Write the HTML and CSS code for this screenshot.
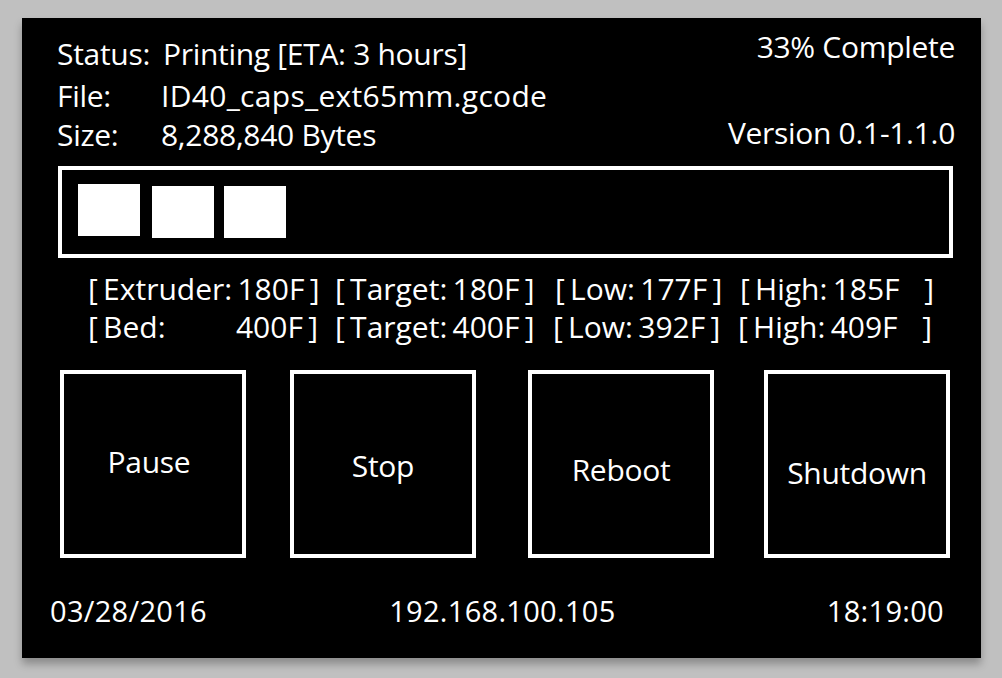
FILE: index.html
```html
<!DOCTYPE html>
<html>
<head>
<meta charset="utf-8">
<link rel="stylesheet" href="styles.css">
</head>
<body>
<div class="panel">
  <div class="header">
    <div class="info">
      <div class="row r1"><span class="lbl">Status:</span><span class="val val-status">Printing [ETA: 3 hours]</span></div>
      <div class="row r2"><span class="lbl">File:</span><span class="val val-file">ID40_caps_ext65mm.gcode</span></div>
      <div class="row r3"><span class="lbl">Size:</span><span class="val">8,288,840 Bytes</span></div>
    </div>
    <div class="meta">
      <div class="pct">33% Complete</div>
      <div class="ver">Version 0.1-1.1.0</div>
    </div>
  </div>
  <div class="progress">
    <div class="blk b1"></div>
    <div class="blk"></div>
    <div class="blk"></div>
  </div>
  <div class="temps">
    <div class="cell c1"><span>[ Extruder: 180F ]</span></div>
    <div class="cell c2"><span>[ Target: 180F ]</span></div>
    <div class="cell c3"><span>[ Low: 177F ]</span></div>
    <div class="cell c4 spread"><span>[ High: 185F</span><span>]</span></div>
    <div class="cell c1 spread"><span>[ Bed:</span><span>400F ]</span></div>
    <div class="cell c2"><span>[ Target: 400F ]</span></div>
    <div class="cell c3 shift"><span>[ Low: 392F ]</span></div>
    <div class="cell c4 spread shift"><span>[ High: 409F</span><span>]</span></div>
  </div>
  <div class="buttons">
    <div class="btn btn-pause">Pause</div>
    <div class="btn btn-stop">Stop</div>
    <div class="btn btn-reboot">Reboot</div>
    <div class="btn btn-shutdown">Shutdown</div>
  </div>
  <div class="footer">
    <span>03/28/2016</span>
    <span class="ip">192.168.100.105</span>
    <span>18:19:00</span>
  </div>
</div>
</body>
</html>
```
FILE: styles.css
```css
html, body {
  margin: 0;
  padding: 0;
}
body {
  background: #c0c0c0;
  width: 1002px;
  height: 678px;
  padding: 18px 0 0 22px;
  box-sizing: border-box;
  font-family: "Open Sans", "Noto Sans", sans-serif;
  color: #fff;
  overflow: hidden;
}
.panel {
  width: 959px;
  height: 640px;
  background: #000;
  box-shadow: 0 6px 8px rgba(0, 0, 0, 0.28);
  box-sizing: border-box;
  padding: 0 26px 0 35px;
  display: flex;
  flex-direction: column;
}
.header {
  display: flex;
  justify-content: space-between;
  font-size: 30px;
  letter-spacing: -0.3px;
  line-height: 40px;
  height: 148px;
}
.info {
  padding-top: 16px;
}
.row {
  display: flex;
  white-space: nowrap;
}
.lbl {
  width: 104px;
}
.val-status { margin-left: 2px; }
.val-file { letter-spacing: 0.3px; }
.r2 { margin-top: 2px; }
.r3 { margin-top: -1px; }
.meta {
  text-align: right;
  padding-top: 9px;
}
.ver {
  margin-top: 46px;
}
.progress {
  margin-left: 1px;
  width: 895px;
  height: 92px;
  border: 4px solid #fff;
  box-sizing: border-box;
  display: flex;
  align-items: flex-start;
  gap: 10px;
  padding: 16px 0 0 16px;
}
.blk {
  width: 62px;
  height: 52px;
  background: #fff;
}
.b1 { margin-top: -2px; margin-right: 2px; }
.temps {
  margin-top: 12px;
  margin-left: 31px;
  display: grid;
  grid-template-columns: 247px 220px 185px 194px;
  font-size: 30px;
  letter-spacing: 0;
  word-spacing: -2.5px;
  line-height: 38px;
  white-space: pre;
}
.cell {
  display: flex;
}
.c1.spread { width: 230px; justify-content: space-between; }
.c4.spread { width: 194px; justify-content: space-between; }
.shift { margin-left: -2px; }
.buttons {
  margin-top: 24px;
  margin-left: 3px;
  display: flex;
}
.btn {
  width: 186px;
  height: 188px;
  border: 4px solid #fff;
  box-sizing: border-box;
  display: flex;
  align-items: center;
  justify-content: center;
  font-size: 30px;
  letter-spacing: -0.3px;
}
.btn-pause { padding-bottom: 5px; padding-right: 8px; }
.btn-stop { padding-top: 3px; margin-left: 44px; }
.btn-reboot { padding-top: 11px; margin-left: 52px; }
.btn-shutdown { padding-top: 17px; margin-left: 50px; }
.footer {
  margin-top: 36px;
  margin-left: -7px;
  margin-right: 11px;
  display: flex;
  justify-content: space-between;
  font-size: 29px;
  letter-spacing: 0.3px;
  line-height: 34px;
}
.ip { margin-right: 29px; }
```
